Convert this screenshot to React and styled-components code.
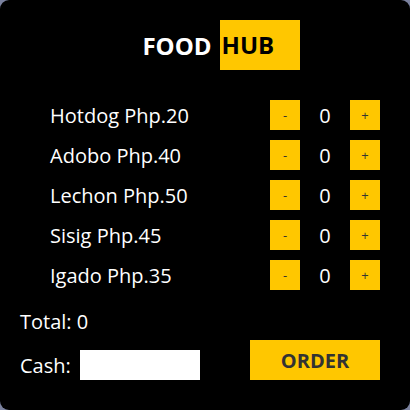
import React, { useState } from "react";
import styled, { createGlobalStyle } from "styled-components";

const GlobalStyle = createGlobalStyle`
  html, body {
    margin: 0;
    padding: 0;
    background: #7a819e;
  }
  body {
    font-family: "Open Sans", "DejaVu Sans", sans-serif;
  }
`;

const Shell = styled.div`
  width: 410px;
  height: 410px;
  box-sizing: border-box;
  background: #000;
  border-radius: 9px;
  color: #fff;
  display: flex;
  flex-direction: column;
  padding-top: 20px;
`;

const Title = styled.h1`
  margin: 0 0 30px;
  height: 50px;
  display: flex;
  justify-content: center;
  align-items: center;
  font-size: 24px;
  font-weight: 700;
  padding-left: 32px;

  span {
    margin-left: 8px;
    width: 80px;
    height: 50px;
    line-height: 50px;
    padding-left: 2px;
    box-sizing: border-box;
    background: #ffc700;
    color: #000;
  }
`;

const MenuList = styled.div`
  display: flex;
  flex-direction: column;
  gap: 10px;
  padding: 0 30px 0 50px;
`;

const Row = styled.div`
  display: grid;
  grid-template-columns: 1fr 30px 50px 30px;
  align-items: center;
  height: 30px;
  font-size: 20px;
`;

const QtyButton = styled.button`
  width: 30px;
  height: 30px;
  padding: 0;
  border: none;
  background: #ffc700;
  color: #333;
  font-family: inherit;
  font-size: 13px;
  cursor: pointer;
`;

const Count = styled.span`
  text-align: center;
  font-size: 20px;
`;

const Footer = styled.div`
  margin-top: 20px;
  display: flex;
  justify-content: space-between;
  align-items: flex-end;
  padding: 0 30px 0 20px;
`;

const Summary = styled.div`
  display: flex;
  flex-direction: column;
  gap: 18px;
  font-size: 20px;
`;

const Line = styled.div`
  display: flex;
  align-items: center;
  gap: 9px;
  height: ${(p) => p.$h || 22}px;
`;

const CashInput = styled.input`
  width: 120px;
  height: 30px;
  box-sizing: border-box;
  border: none;
  outline: none;
  background: #fff;
  padding: 0 6px;
  font-family: inherit;
`;

const OrderButton = styled.button`
  width: 130px;
  height: 40px;
  border: none;
  background: #ffc700;
  color: #333;
  font-family: inherit;
  font-weight: 700;
  font-size: 20px;
  cursor: pointer;
`;

const items = [
  { name: "Hotdog", price: 20 },
  { name: "Adobo", price: 40 },
  { name: "Lechon", price: 50 },
  { name: "Sisig", price: 45 },
  { name: "Igado", price: 35 },
];

export default function App() {
  const [qty, setQty] = useState(items.map(() => 0));
  const [cash, setCash] = useState("");

  const change = (i, d) =>
    setQty((q) => q.map((v, j) => (j === i ? Math.max(0, v + d) : v)));

  const total = qty.reduce((s, v, i) => s + v * items[i].price, 0);

  return (
    <>
      <GlobalStyle />
      <Shell>
        <Title>
          FOOD<span>HUB</span>
        </Title>
        <MenuList>
          {items.map((item, i) => (
            <Row key={item.name}>
              <span>
                {item.name} Php.{item.price}
              </span>
              <QtyButton onClick={() => change(i, -1)}>-</QtyButton>
              <Count>{qty[i]}</Count>
              <QtyButton onClick={() => change(i, 1)}>+</QtyButton>
            </Row>
          ))}
        </MenuList>
        <Footer>
          <Summary>
            <Line>Total: {total}</Line>
            <Line $h={30}>
              Cash:
              <CashInput value={cash} onChange={(e) => setCash(e.target.value)} />
            </Line>
          </Summary>
          <OrderButton>ORDER</OrderButton>
        </Footer>
      </Shell>
    </>
  );
}
